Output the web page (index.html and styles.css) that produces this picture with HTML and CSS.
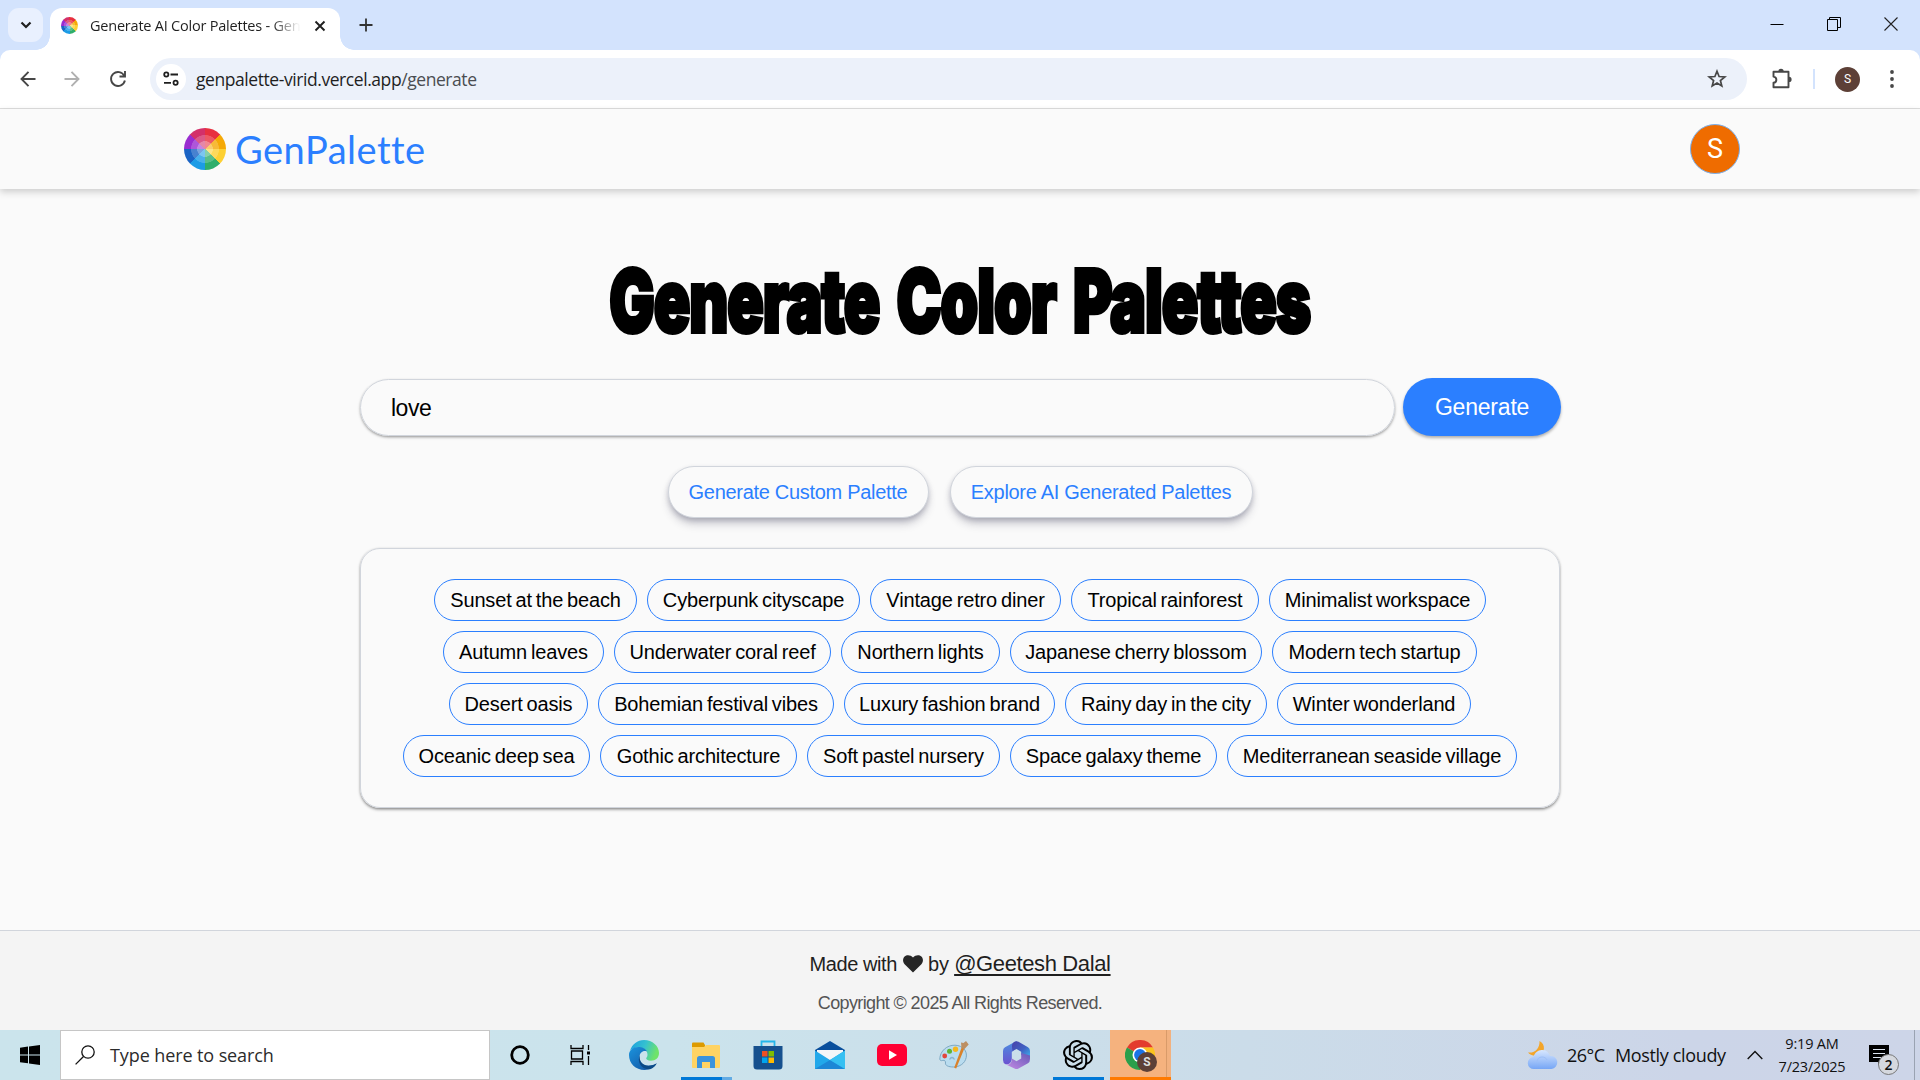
FILE: index.html
```html
<!DOCTYPE html>
<html lang="en">
<head>
<meta charset="utf-8">
<title>Generate AI Color Palettes - GenPalette</title>
<link rel="stylesheet" href="styles.css">
</head>
<body>
<div class="tabstrip">
  <div class="tabsearch"><svg width="12" height="8" viewBox="0 0 12 8"><path d="M1.5 1.5 6 6l4.500-4.500" fill="none" stroke="#1f1f1f" stroke-width="2.200"/></svg></div>
  <div class="tab">
    <span class="wheel wheel-sm"></span>
    <span class="tab-title">Generate AI Color Palettes - Gen</span>
    <svg class="tab-close" width="12" height="12" viewBox="0 0 12 12"><path d="M1.500 1.500l9 9M10.500 1.500l-9 9" stroke="#1f1f1f" stroke-width="1.900"/></svg>
  </div>
  <svg class="newtab" width="14" height="14" viewBox="0 0 14 14"><path d="M7 .5v13M.5 7h13" stroke="#333" stroke-width="1.800"/></svg>
  <div class="winctl">
    <svg width="14" height="14" viewBox="0 0 14 14"><path d="M.5 7.500h13" stroke="#000"/></svg>
    <svg width="14" height="14" viewBox="0 0 14 14"><path d="M.5 2.500h10v11H.5zM2.500 2.500v-2h11v10h-3" fill="none" stroke="#000"/></svg>
    <svg width="14" height="14" viewBox="0 0 14 14"><path d="M.5.5l13 13M13.500.5l-13 13" stroke="#222" stroke-width="1.100"/></svg>
  </div>
</div>
<div class="toolbar">
  <svg class="back" width="16" height="16" viewBox="0 0 16 16"><path d="M8.500.8 1.500 8l7 7.200M1.500 8H15.500" fill="none" stroke="#474747" stroke-width="1.900"/></svg>
  <svg class="fwd" width="16" height="16" viewBox="0 0 16 16"><path d="M7.500.8 14.500 8l-7 7.200M14.500 8H.5" fill="none" stroke="#b0b0b0" stroke-width="1.900"/></svg>
  <svg class="reload" width="18" height="18" viewBox="0 0 18 18"><path d="M15.300 5.800A7 7 0 1 0 15.900 10.500M16 1v5.500h-5.500" fill="none" stroke="#474747" stroke-width="1.900"/></svg>
  <div class="omnibox">
    <span class="siteinfo"><svg width="16" height="16" viewBox="0 0 16 16"><g fill="none" stroke="#1f1f1f" stroke-width="1.800"><circle cx="3.300" cy="3.500" r="2.100"/><path d="M7.500 3.500h7.500M1 11.800h7"/><circle cx="12.600" cy="11.800" r="2.100"/></g></svg></span>
    <span class="url">genpalette-virid.vercel.app<span class="path">/generate</span></span>
    <svg class="star" width="20" height="20" viewBox="0 0 20 20"><path d="M10 2.200l2.100 5.300 5.700.4-4.400 3.600 1.400 5.500L10 14l-4.800 3 1.400-5.500L2.200 7.900l5.700-.4z" fill="none" stroke="#474747" stroke-width="1.700"/></svg>
  </div>
  <svg class="ext" width="22" height="22" viewBox="0 0 22 22"><path d="M2.500 3.800h15v15.500h-15v-4.500c3.600-.3 4-5.500 0-6.200z" fill="none" stroke="#474747" stroke-width="1.900" stroke-linejoin="round"/><path d="M7.300 3.500a2.700 2.700 0 0 1 5.400 0zM18 8.800a2.600 2.600 0 0 1 0 5.200z" fill="#474747"/></svg>
  <span class="sep"></span>
  <span class="profile">S</span>
  <svg class="dots" width="4" height="18" viewBox="0 0 4 18"><g fill="#474747"><circle cx="2" cy="2" r="1.900"/><circle cx="2" cy="9" r="1.900"/><circle cx="2" cy="16" r="1.900"/></g></svg>
</div>
<header class="site-head">
  <div class="brand"><span class="wheel"></span><span class="brand-name">GenPalette</span></div>
  <span class="avatar">S</span>
</header>
<main>
  <div class="title-row"><h1>Generate Color Palettes</h1></div>
  <div class="prompt"><div class="field">love</div><div class="go">Generate</div></div>
  <div class="links"><div class="pill pill-a">Generate Custom Palette</div><div class="pill pill-b">Explore AI Generated Palettes</div></div>
  <section class="card">
    <div class="row r1"><span>Sunset at the beach</span><span>Cyberpunk cityscape</span><span>Vintage retro diner</span><span>Tropical rainforest</span><span>Minimalist workspace</span></div>
    <div class="row r2"><span>Autumn leaves</span><span>Underwater coral reef</span><span>Northern lights</span><span>Japanese cherry blossom</span><span>Modern tech startup</span></div>
    <div class="row r3"><span>Desert oasis</span><span>Bohemian festival vibes</span><span>Luxury fashion brand</span><span>Rainy day in the city</span><span>Winter wonderland</span></div>
    <div class="row r4"><span>Oceanic deep sea</span><span>Gothic architecture</span><span>Soft pastel nursery</span><span>Space galaxy theme</span><span>Mediterranean seaside village</span></div>
  </section>
</main>
<footer class="site-foot">
  <div class="made"><span class="made-a">Made with</span><svg width="20" height="18" viewBox="0 0 20 18"><path d="M10 17.500 1.600 9.200C-.5 7-.4 3.500 1.600 1.600 3.800-.5 7.500-.2 10 2.600 12.500-.2 16.200-.5 18.400 1.600c2 1.900 2.100 5.400 0 7.600z" fill="#262626"/></svg><span class="made-b">by</span><span class="author">@Geetesh Dalal</span></div>
  <div class="copy">Copyright © 2025 All Rights Reserved.</div>
</footer>
<div class="taskbar">
  <div class="start"><svg width="20" height="20" viewBox="0 0 20 20"><path d="M0 2.700 8 1.600v7.800H0zM9 1.400 20 0v9.400H9zM0 10.400h8v7.900l-8-1.100zM9 10.400h11V20L9 18.500z"/></svg></div>
  <div class="search"><svg width="20" height="20" viewBox="0 0 20 20"><circle cx="13" cy="7" r="6.200" fill="none" stroke="#111" stroke-width="1.300"/><path d="M8.500 11.500.6 19.400" stroke="#111" stroke-width="1.300"/></svg><span>Type here to search</span></div>
  <div class="slot s-cort"><svg width="20" height="20" viewBox="0 0 20 20"><circle cx="10" cy="10" r="8.300" fill="none" stroke="#000" stroke-width="2.800"/></svg></div>
  <div class="slot s-task"><svg width="21" height="20" viewBox="0 0 21 20"><path d="M1 0v3.500h12V0M1 20v-3.500h12V20M1.500 6h11v8h-11zM18.500 0v5M18.500 11v9" fill="none" stroke="#000" stroke-width="1.300"/><path d="M17 6.500h3v3h-3z"/></svg></div>
  <div class="slot"><svg width="30" height="30" viewBox="0 0 30 30"><defs><linearGradient id="eg" x1="0" y1="0" x2="1" y2=".3"><stop offset="0" stop-color="#1a9de0"/><stop offset=".55" stop-color="#35c1d0"/><stop offset="1" stop-color="#6fe36a"/></linearGradient><linearGradient id="eb" x1="0" y1="0" x2="1" y2="1"><stop offset="0" stop-color="#1b93dd"/><stop offset="1" stop-color="#124f9d"/></linearGradient></defs><path d="M1 11C3 4 8.500 0 15 0c8.500 0 15 6 15 13 0 5-3.500 7.700-8 7.700-3.500 0-5-1.400-4.800-2.400.2-.8 1.300-1.300 1.300-3.600C18.500 10 14 7.500 9.500 7.500 5.500 7.500 2.500 9 1 11z" fill="url(#eg)"/><path d="M0 15c0-4.500 4-8 9.500-8 4 0 7.500 2 8.500 4.500-4-1.500-7.500 1.500-7.500 5.500 0 5.500 4 8.700 9 8.700 3 0 5.500-.8 8-2.200C25.500 27 21 30 15.500 30 6.500 30 0 23.500 0 15z" fill="url(#eb)"/><path d="M11 14c-1.500 5 1 11.700 8.500 11.700 3 0 6-.8 8.300-2.500-1 2.400-3.600 4.800-6.800 6C12 29.500 7.500 22 11 14z" fill="#0c4a86"/></svg></div>
  <div class="slot run-split"><svg width="28" height="26" viewBox="0 0 28 26"><path d="M0 1.500Q0 .5 1 .5h10.500L13 3v4H0z" fill="#dd9a00"/><path d="M0 5h12l2-2h13q1 0 1 1v21q0 1-1 1H1q-1 0-1-1z" fill="#ffd363"/><path d="M5 26V16.500Q5 14 7.500 14h13q2.500 0 2.500 2.500V26h-5v-6h-8v6z" fill="#3b93dc"/></svg></div>
  <div class="slot"><svg width="30" height="30" viewBox="0 0 30 30"><path d="M8.500 7V1.500h13V7" fill="none" stroke="#25b6ea" stroke-width="1.800"/><path d="M.5 6h29v20q0 3.500-3.500 3.500H4Q.5 29.500.5 26z" fill="#16508e"/><path d="M9 11h5.500v5.500H9z" fill="#f05023"/><path d="M15.500 11H21v5.500h-5.500z" fill="#7fbb00"/><path d="M9 17.500h5.500V23H9z" fill="#00a5ef"/><path d="M15.500 17.500H21V23h-5.500z" fill="#ffb900"/></svg></div>
  <div class="slot"><svg width="30" height="28" viewBox="0 0 30 28"><path d="M0 9 15 0l15 9v4H0z" fill="#0a4f9c"/><path d="M2 9h26v9L15 23 2 18z" fill="#f4f6f8"/><path d="M0 9.500 15 19 30 9.500V28H0z" fill="#22a8ea"/><path d="M0 28 15 19l15 9z" fill="#1d87d6"/><path d="M15 19 30 9.500V28z" fill="#36c0f2"/></svg></div>
  <div class="slot"><svg width="30" height="22" viewBox="0 0 30 22"><rect width="30" height="22" rx="5" fill="#ff0033"/><path d="M12 6.300v9.400l8-4.700z" fill="#fff"/></svg></div>
  <div class="slot"><svg width="30" height="30" viewBox="0 0 30 30"><path d="M.8 19C1 11 8 5 16 5.200c8 .3 12.500 5.800 11.200 12.300C26 23.500 20.500 27 14.500 27c-5 0-8.500-1.500-8-4 .3-2-1-3-2.700-2.600C2 21 .8 20.500.8 19z" fill="#b9dcef" stroke="#7ea9c4"/><circle cx="5.700" cy="16" r="2.400" fill="#e2453c"/><circle cx="10.500" cy="11.300" r="2.500" fill="#5fb336"/><circle cx="16.500" cy="9.200" r="2.700" fill="#f5b71e"/><path d="M10.500 19.500q2.500-4 5 0" fill="none" stroke="#8ab4cd" stroke-width="1.300"/><path d="M22.800 7 25.300 8.500 17.200 28.500l-2-.8z" fill="#d9822b"/><path d="M22.500 8.200 22 2.500l2.500.5L27 1l2.700 3.500L25.500 9z" fill="#bc8f62"/></svg></div>
  <div class="slot"><svg width="27" height="28" viewBox="0 0 27 28"><defs><linearGradient id="mo" x1="0" y1="0" x2="0" y2="1"><stop offset="0" stop-color="#4a8fe0"/><stop offset="1" stop-color="#6b52d0"/></linearGradient><linearGradient id="mr" x1="0" y1="0" x2="1" y2="1"><stop offset="0" stop-color="#4a3fa8"/><stop offset=".55" stop-color="#3f62c4"/><stop offset="1" stop-color="#3fb6ee"/></linearGradient><linearGradient id="mb" x1="0" y1="1" x2="1" y2="0"><stop offset="0" stop-color="#c58be4"/><stop offset="1" stop-color="#6558b8"/></linearGradient></defs><path d="M13.500 0 2 6.300Q0 7.500 0 10v9q0 3 2.500 4.300Q8 24 8.800 18v-7l5.700-4.500z" fill="url(#mo)"/><path d="M11.500.8Q13.500-.4 15.500.8l9.500 5.500q2 1.200 2 3.700v7l-8.800-3v-3.200L13.500 8 9.500 10C9 6 8 3 11.500.8z" fill="url(#mr)"/><path d="M27 14.500V18q0 3-2 4.300l-9.500 5.200q-2 1-4 0L3 23.500C7 24 8.800 22 8.800 17.500l4.700 2.800 4.700-2.800V12z" fill="url(#mb)"/></svg></div>
  <div class="slot run"><svg width="30" height="30" viewBox="0 0 24 24"><path d="M22.2819 9.8211a5.9847 5.9847 0 0 0-.5157-4.9108 6.0462 6.0462 0 0 0-6.5098-2.9A6.0651 6.0651 0 0 0 4.9807 4.1818a5.9847 5.9847 0 0 0-3.9977 2.9 6.0462 6.0462 0 0 0 .7427 7.0966 5.98 5.98 0 0 0 .511 4.9107 6.051 6.051 0 0 0 6.5146 2.9001A5.9847 5.9847 0 0 0 13.2599 24a6.0557 6.0557 0 0 0 5.7718-4.2058 5.9894 5.9894 0 0 0 3.9977-2.9001 6.0557 6.0557 0 0 0-.7475-7.0729zm-9.022 12.6081a4.4755 4.4755 0 0 1-2.8764-1.0408l.1419-.0804 4.7783-2.7582a.7948.7948 0 0 0 .3927-.6813v-6.7369l2.02 1.1686a.071.071 0 0 1 .038.052v5.5826a4.504 4.504 0 0 1-4.4945 4.4944zm-9.6607-4.1254a4.4708 4.4708 0 0 1-.5346-3.0137l.142.0852 4.783 2.7582a.7712.7712 0 0 0 .7806 0l5.8428-3.3685v2.3324a.0804.0804 0 0 1-.0332.0615L9.74 19.9502a4.4992 4.4992 0 0 1-6.1408-1.6464zM2.3408 7.8956a4.485 4.485 0 0 1 2.3655-1.9728V11.6a.7664.7664 0 0 0 .3879.6765l5.8144 3.3543-2.0201 1.1685a.0757.0757 0 0 1-.071 0l-4.8303-2.7865A4.504 4.504 0 0 1 2.3408 7.872zm16.5963 3.8558L13.1038 8.364 15.1192 7.2a.0757.0757 0 0 1 .071 0l4.8303 2.7913a4.4944 4.4944 0 0 1-.6765 8.1042v-5.6772a.79.79 0 0 0-.407-.667zm2.0107-3.0231l-.142-.0852-4.7735-2.7818a.7759.7759 0 0 0-.7854 0L9.409 9.2297V6.8974a.0662.0662 0 0 1 .0284-.0615l4.8303-2.7866a4.4992 4.4992 0 0 1 6.6802 4.66zM8.3065 12.863l-2.02-1.1638a.0804.0804 0 0 1-.038-.0567V6.0742a4.4992 4.4992 0 0 1 7.3757-3.4537l-.142.0805L8.704 5.459a.7948.7948 0 0 0-.3927.6813zm1.0976-2.3654l2.602-1.4998 2.6069 1.4998v2.9994l-2.5974 1.4997-2.6067-1.4997Z"/></svg></div>
  <div class="slot active"><svg width="30" height="30" viewBox="0 0 30 30"><path d="M15 15 2 7.500A15 15 0 0 1 28 7.500H15z" fill="#e33b2e"/><path d="M15 15 2 7.500A15 15 0 0 0 15 30l6.500-11.200z" fill="#2a9f4b"/><path d="M15 7.500H28A15 15 0 0 1 15 30l6.500-11.200z" fill="#fcc31e"/><circle cx="15" cy="15" r="7.500" fill="#fff"/><circle cx="15" cy="15" r="5.900" fill="#1a73e8"/></svg><span class="mini">S</span></div>
  <div class="tray">
    <svg width="31" height="30" viewBox="0 0 31 30"><defs><linearGradient id="cl" x1="0" y1="0" x2="0" y2="1"><stop offset="0" stop-color="#d8e7ff"/><stop offset="1" stop-color="#76a6f5"/></linearGradient></defs><path d="M12.500 1c6.500 3 6 13-2 14.500C6.500 16 2.500 15 1 12.500 8 13.500 13 8 12.500 1z" fill="#f3a52b"/><path d="M7 29a6 6 0 0 1-.5-12c1-4.500 5-7.500 9-7 4 .3 6.500 2.500 7.500 6a6.500 6.500 0 0 1 1.500 13z" fill="url(#cl)"/><path d="M10 22c0-3 2-5 5-5 2.500 0 4 1 5 3" fill="none" stroke="#9dbff8"/></svg>
    <span class="temp">26°C</span><span class="cond">Mostly cloudy</span>
    <svg class="chev" width="16" height="10" viewBox="0 0 16 10"><path d="M.7 9 8 1.500 15.300 9" fill="none" stroke="#111" stroke-width="1.400"/></svg>
    <div class="clock"><span>9:19 AM</span><span class="date">7/23/2025</span></div>
    <div class="notif"><svg width="20" height="20" viewBox="0 0 20 20"><path d="M0 0h20v17H13l-4 3.500V17H0z"/><path d="M4 4.500h12M4 8.500h12M4 12.500h8" stroke="#dce4ef" stroke-width="1.200"/></svg><span class="badge">2</span></div>
    <span class="peek"></span>
  </div>
</div>
</body>
</html>
```
FILE: styles.css
```css
* { box-sizing: border-box; }
body { margin: 0; width: 1920px; height: 1080px; overflow: hidden; display: flex; flex-direction: column; background: #fafafa; font-family: "Liberation Sans", sans-serif; color: #000; }
svg { flex: none; display: block; }
span { white-space: nowrap; }

.tabstrip { height: 60px; margin-bottom: -10px; flex: none; background: #d3e3fd; display: flex; align-items: flex-start; }
.tabsearch { width: 35px; height: 34px; margin: 8px 7px 0 8px; border-radius: 11px; background: #e9f0fe; display: flex; align-items: center; justify-content: center; }
.tab { position: relative; width: 290px; height: 42px; margin-top: 8px; background: #fff; border-radius: 12px 12px 0 0; display: flex; align-items: center; padding: 0 14px 7px 11px; }
.tab::before, .tab::after { content: ""; position: absolute; bottom: 0; width: 14px; height: 14px; }
.tab::before { left: -14px; background: radial-gradient(circle at 0 0, transparent 13.5px, #fff 14px); }
.tab::after { right: -14px; background: radial-gradient(circle at 100% 0, transparent 13.5px, #fff 14px); }
.wheel { flex: none; width: 42px; height: 42px; border-radius: 50%; background: radial-gradient(circle, rgba(255,255,255,.42) 0 26%, rgba(255,255,255,.2) 27% 46%, transparent 48%), conic-gradient(#e8303f 0 12.5%, #f5a906 0 25%, #fdd033 0 37.5%, #2fae6b 0 50%, #1c9ce6 0 62.5%, #1a63c4 0 75%, #9a2cd0 0 87.5%, #d3306a 0); }
.wheel-sm { width: 17px; height: 17px; }
.tab-title { margin-left: 12px; font: 14.5px/20px "Open Sans", sans-serif; letter-spacing: -.22px; color: transparent; background: linear-gradient(90deg, #1f1f1f 182px, rgba(31,31,31,.05) 208px); -webkit-background-clip: text; background-clip: text; }
.tab-close { margin-left: auto; }
.newtab { margin: 18px 0 0 19px; }
.winctl { margin: 17px 22px 0 auto; display: flex; gap: 43px; }

.toolbar { height: 59px; flex: none; position: relative; background: #fff; border-radius: 10px 10px 0 0; border-bottom: 1px solid #dedede; display: flex; align-items: center; padding: 0 23px 0 20px; }
.fwd { margin-left: 28px; }
.reload { margin-left: 29px; }
.omnibox { margin-left: 23px; width: 1597px; height: 42px; border-radius: 21px; background: #ecf1fa; display: flex; align-items: center; padding: 0 20px 0 6px; }
.siteinfo { width: 30px; height: 30px; border-radius: 50%; background: #fff; display: flex; align-items: center; justify-content: center; }
.url { margin-left: 10px; font: 17.5px/24px "Open Sans", sans-serif; letter-spacing: -.43px; color: #1f1f1f; }
.path { color: #4a4d51; }
.star { margin-left: auto; }
.ext { margin-left: 24px; }
.sep { width: 2px; height: 20px; margin-left: 20px; background: #d3e3fd; }
.profile { width: 25px; height: 25px; margin-left: 20px; border-radius: 50%; background: #5d4037; color: #fff; font: 12px/25px Roboto, sans-serif; text-align: center; }
.dots { margin-left: auto; margin-right: 3px; }

.site-head { height: 80px; flex: none; position: relative; background: #fafafa; box-shadow: 0 3px 7px rgba(0,0,0,.18); display: flex; align-items: center; justify-content: space-between; padding: 0 180px 0 184px; }
.brand { display: flex; align-items: center; gap: 9px; }
.brand-name { font: 38px/48px Lato, sans-serif; font-variant-ligatures: none; letter-spacing: .5px; color: #2b7fff; }
.avatar { width: 50px; height: 50px; border: 1px solid #7ab0ee; border-radius: 50%; background: #ef6c00; color: #fff; font: 27px/49px Roboto, sans-serif; text-align: center; }

main { width: 1202px; height: 741px; flex: none; margin: 0 auto; padding-left: 1px; }
.title-row { height: 189px; padding-top: 34px; display: flex; align-items: center; justify-content: center; }
h1 { margin: 0 2px 0 0; flex: none; white-space: nowrap; font: 900 87px/92px Inter, sans-serif; letter-spacing: -1.500px; word-spacing: 9px; -webkit-text-stroke: 4px #000; transform: scaleX(.693); }
.prompt { display: flex; gap: 8px; height: 58px; }
.field { width: 1036px; border: 1px solid #d1d5dc; border-radius: 29px; box-shadow: 0 1.5px 3px rgba(0,0,0,.25), 0 1px 2px rgba(0,0,0,.15); padding: 0 30px; font-size: 23px; line-height: 56px; letter-spacing: -.5px; margin-top: 1px; }
.go { width: 158px; border-radius: 29px; background: #2b7fff; color: #fff; box-shadow: 0 2px 3px rgba(0,0,0,.3); font-size: 23px; line-height: 59px; letter-spacing: -.2px; text-align: center; }
.links { display: flex; gap: 21px; justify-content: center; margin: 30px 1px 0 0; }
.pill { height: 52px; border: 1px solid #d1d5dc; border-radius: 26px; background: #fafafa; box-shadow: 0 7px 10px -2px rgba(40,40,70,.28), 0 2px 5px rgba(40,40,70,.18); color: #2b7fff; font-size: 20px; line-height: 51px; letter-spacing: -.3px; text-align: center; }
.pill-a { width: 261px; }
.pill-b { width: 303px; }
.card { width: 1200px; height: 260px; margin-top: 30px; border: 1px solid #d1d5dc; border-radius: 20px; box-shadow: 0 1.5px 3px rgba(0,0,0,.28), 0 1px 2px rgba(0,0,0,.2); padding-top: 30px; display: flex; flex-direction: column; gap: 10px; }
.row { display: flex; justify-content: center; gap: 10px; height: 42px; }
.row span { border: 1px solid #2b7fff; border-radius: 21px; font-size: 20px; line-height: 40px; letter-spacing: -.15px; word-spacing: -1.500px; text-align: center; width: 203px; }
.r1 span:nth-child(2) { width: 213px; }
.r1 span:nth-child(3) { width: 191px; }
.r1 span:nth-child(4) { width: 188px; }
.r1 span:nth-child(5) { width: 217px; }
.r2 span:nth-child(1) { width: 161px; }
.r2 span:nth-child(2) { width: 217px; }
.r2 span:nth-child(3) { width: 159px; }
.r2 span:nth-child(4) { width: 252px; }
.r2 span:nth-child(5) { width: 205px; }
.r3 span:nth-child(1) { width: 139px; }
.r3 span:nth-child(2) { width: 236px; }
.r3 span:nth-child(3) { width: 211px; }
.r3 span:nth-child(4) { width: 202px; }
.r3 span:nth-child(5) { width: 194px; }
.r4 span:nth-child(1) { width: 187px; }
.r4 span:nth-child(2) { width: 197px; }
.r4 span:nth-child(3) { width: 193px; }
.r4 span:nth-child(4) { width: 207px; }
.r4 span:nth-child(5) { width: 290px; }

.site-foot { height: 100px; flex: none; border-top: 1px solid #d1d5dc; background: #f4f4f4; padding-top: 17px; text-align: center; }
.made { display: flex; justify-content: center; align-items: center; height: 32px; color: #1f1f1f; font-size: 20px; }
.made svg { margin: 0 5px 0 6px; }
.made-a { letter-spacing: -.4px; }
.author { margin-left: 5px; font-size: 22px; line-height: 30px; letter-spacing: -.38px; text-decoration: underline; text-decoration-thickness: 2px; text-underline-offset: 3px; }
.copy { margin-top: 10px; font-size: 18px; line-height: 26px; letter-spacing: -.62px; color: #555; }

.taskbar { height: 50px; flex: none; display: flex; background: linear-gradient(90deg, #cbe4ec 0, #cbe3ec 35%, #cbdce9 65%, #ccd5e8 88%, #cdd5e8 100%); font-family: "Open Sans", sans-serif; }
.start { width: 60px; display: flex; align-items: center; justify-content: center; }
.search { width: 430px; border: 1px solid #c6c6c6; background: #fff; display: flex; align-items: center; padding-left: 14px; gap: 15px; font-size: 18px; letter-spacing: -.1px; color: #2b2b2b; }
.slot { position: relative; width: 62px; display: flex; align-items: center; justify-content: center; }
.s-cort { width: 60px; }
.s-task { width: 61px; margin-right: 2px; }
.run-split::after, .run::after { content: ""; position: absolute; left: 6px; bottom: 0; width: 51px; height: 3px; background: #0078d7; }
.run-split::after { background: linear-gradient(90deg, #0078d7 41px, #62abe4 41px); }
.active { width: 61px; margin-left: 1px; background: linear-gradient(90deg, #f5b27e 56px, #d99b69 56px 57px, #f2b17f 57px); border-bottom: 3px solid #ff7a00; padding-top: 3px; }
.active svg { margin-right: 2px; }
.mini { position: absolute; left: 27px; top: 22px; width: 20px; height: 20px; border-radius: 50%; background: #5d4037; color: #ddd; font: 700 12px/20px Roboto, sans-serif; text-align: center; }
.tray { margin-left: auto; display: flex; align-items: center; height: 50px; font-size: 18px; color: #111; }
.temp { margin-left: 9px; width: 38px; letter-spacing: -.5px; }
.cond { margin-left: 10px; width: 111px; letter-spacing: -.35px; }
.chev { margin-left: 21px; }
.clock { margin-left: 14px; width: 70px; display: flex; flex-direction: column; align-items: center; font-size: 14.5px; line-height: 23px; letter-spacing: -.2px; }
.notif { position: relative; margin-left: 22px; width: 20px; }
.badge { position: absolute; left: 9px; top: 9px; width: 21px; height: 21px; border: 1px solid #777; border-radius: 50%; background: #d5d8de; font: 600 14px/19px "Open Sans", sans-serif; text-align: center; }
.peek { width: 1px; height: 50px; margin: 0 5px 0 25px; background: #9aa3b2; }
```
